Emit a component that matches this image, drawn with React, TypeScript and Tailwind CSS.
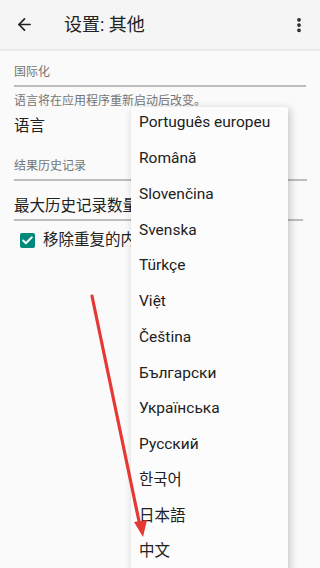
import React from 'react';
import { ArrowLeft, EllipsisVertical, Check } from 'lucide-react';

const languages = [
  'Português europeu',
  'Română',
  'Slovenčina',
  'Svenska',
  'Türkçe',
  'Việt',
  'Čeština',
  'Български',
  'Українська',
  'Русский',
  '한국어',
  '日本語',
  '中文',
];

const font = { fontFamily: 'Roboto, "Noto Sans CJK SC", sans-serif' };

const App: React.FC = () => {
  return (
    <div
      className="relative w-[320px] h-[568px] overflow-hidden bg-[#fafafa] text-[#212121]"
      style={font}
    >
      {/* Toolbar */}
      <div className="h-[50px] flex items-center bg-[#f5f5f5] border-b border-[#e4e4e4] shadow-[0_1px_2px_rgba(0,0,0,0.06)]">
        <ArrowLeft className="ml-[15px] w-[19px] h-[19px] text-[#222]" strokeWidth={2.2} />
        <span className="ml-[30px] text-[18px] text-[#222]">设置: 其他</span>
        <EllipsisVertical className="ml-auto mr-[12px] w-[18px] h-[18px] text-[#222]" strokeWidth={3} />
      </div>

      {/* Preferences */}
      <div className="px-[14px]">
        <div className="pt-[14px] text-[12px] leading-[16px] text-[#757575]">国际化</div>
        <div className="mt-[5px] h-[2px] w-[292px] bg-[#bdbdbd]" />
        <div className="mt-[6px] text-[12px] leading-[16px] text-[#757575]">
          语言将在应用程序重新启动后改变。
        </div>
        <div className="mt-[7px] text-[15.5px] leading-[20px]">语言</div>

        <div className="mt-[22px] text-[12px] leading-[16px] text-[#757575]">结果历史记录</div>
        <div className="mt-[5px] h-[2px] w-[293px] bg-[#bdbdbd]" />
        <div className="mt-[15px] text-[15.5px] leading-[20px]">最大历史记录数量</div>
        <div className="mt-[3px] h-[2px] w-[289px] bg-[#bdbdbd]" />
        <div className="mt-[9px] flex items-center">
          <span className="ml-[6px] w-[15px] h-[15px] rounded-[2px] bg-[#00897b] flex items-center justify-center">
            <Check className="w-[13px] h-[13px] text-white" strokeWidth={3.5} />
          </span>
          <span className="ml-[8px] text-[15.5px] leading-[20px]">移除重复的内容</span>
        </div>
      </div>

      {/* Dropdown menu */}
      <div className="absolute left-[131px] top-[107px] w-[157px] h-[470px] overflow-hidden bg-[#fcfcfc] rounded-t-[2px] shadow-[2px_2px_8px_rgba(0,0,0,0.22)]">
        <ul className="-mt-[2px]">
          {languages.map((lang) => (
            <li key={lang} className="h-[35.75px] flex items-center pl-[8px] text-[15.5px] text-[#212121]">
              {lang}
            </li>
          ))}
        </ul>
      </div>

      {/* Red arrow annotation */}
      <svg className="absolute left-0 top-0 pointer-events-none" width="320" height="568">
        <line x1="92" y1="296" x2="140" y2="526" stroke="#e53935" strokeWidth="3.2" strokeLinecap="round" />
        <polygon points="143,537 134,522 147,520" fill="#e53935" />
      </svg>
    </div>
  );
};

export default App;
